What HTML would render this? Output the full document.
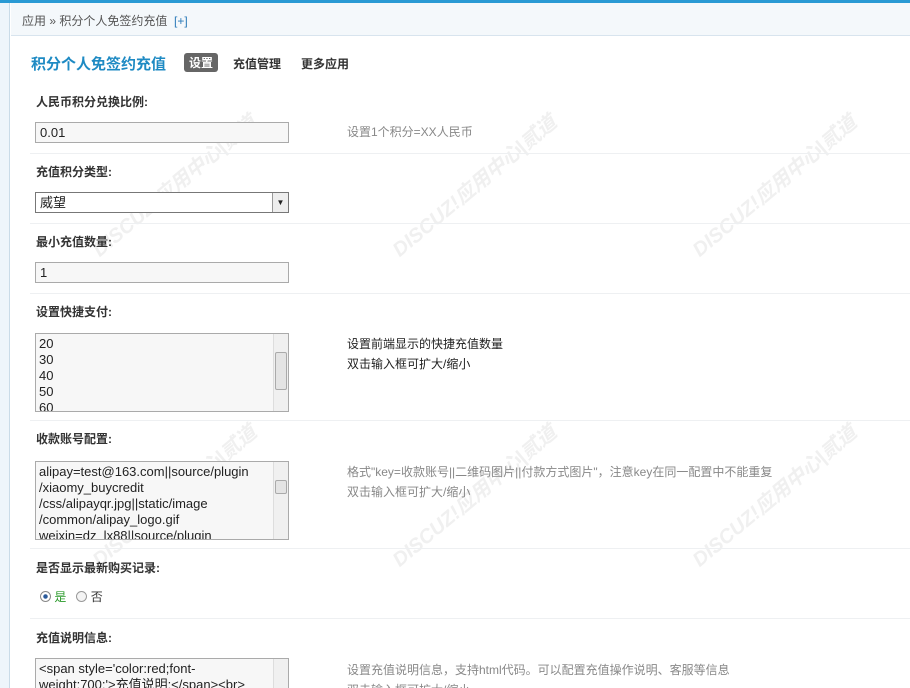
<!DOCTYPE html>
<html><head><meta charset="utf-8"><style>
*{box-sizing:border-box;margin:0;padding:0}
html,body{width:910px;height:688px;overflow:hidden}
body{background:#fff;font-family:"Liberation Sans","Noto Sans CJK SC",sans-serif;font-size:12px;color:#333;position:relative}
.top{position:absolute;left:0;top:0;width:910px;height:3px;background:#2a9ad4}
.side{position:absolute;left:0;top:3px;width:10px;height:685px;background:#eef5fb;border-right:1px solid #c9dbe8}
.crumb{position:absolute;left:11px;top:3px;right:0;height:33px;background:#f4f8fb;border-bottom:1px solid #d8e4ee;padding:9px 0 0 11px;color:#555;font-size:12px}
.crumb b{font-weight:normal;color:#2a7ab8}
.t{position:absolute;left:31px;top:53px;font-size:15px;font-weight:bold;color:#1e8ac3}
.tab{position:absolute;top:55px;font-size:12px;font-weight:bold;color:#333}
.tab.on{background:#666;color:#fff;border-radius:3px;padding:1px 5px;top:53px}
.lab{position:absolute;left:36px;font-weight:bold;font-size:12px;color:#333}
.in{position:absolute;left:35px;width:254px;border:1px solid #aaa;background:#f7f7f7;font-size:13px;padding:2px 4px;height:21px;color:#222;line-height:15px}
.ta{position:absolute;left:35px;width:254px;border:1px solid #aaa;background:#f7f7f7;font-size:13px;line-height:16px;padding:2px 3px;overflow:hidden;color:#222}
.sb{position:absolute;right:0;top:0;bottom:0;width:15px;background:#f0f0f0;border-left:1px solid #ddd}
.sb i{position:absolute;left:1px;width:12px;background:#e4e4e4;border:1px solid #aaa;border-radius:2px}
.tip{position:absolute;left:347px;color:#888;font-size:12px;line-height:20px}
.sep{position:absolute;left:30px;right:0;height:1px;background:#eef0f2}
.wm{position:absolute;color:#f0f0f0;font-size:20px;font-weight:bold;font-style:italic;transform:rotate(-40deg);white-space:nowrap}
</style></head><body>
<div class="top"></div><div class="side"></div>
<div class="crumb">应用 » 积分个人免签约充值 &nbsp;<b>[+]</b></div>
<div class="wm" style="left:370px;top:170px">DISCUZ!应用中心|贰道</div>
<div class="wm" style="left:670px;top:170px">DISCUZ!应用中心|贰道</div>
<div class="wm" style="left:70px;top:170px">DISCUZ!应用中心|贰道</div>
<div class="wm" style="left:370px;top:480px">DISCUZ!应用中心|贰道</div>
<div class="wm" style="left:670px;top:480px">DISCUZ!应用中心|贰道</div>
<div class="wm" style="left:70px;top:480px">DISCUZ!应用中心|贰道</div>
<div class="t">积分个人免签约充值</div>
<div class="tab on" style="left:184px">设置</div>
<div class="tab" style="left:233px">充值管理</div>
<div class="tab" style="left:301px">更多应用</div>

<div class="lab" style="top:93px">人民币积分兑换比例:</div>
<div class="in" style="top:122px">0.01</div>
<div class="tip" style="top:122px">设置1个积分=XX人民币</div>
<div class="sep" style="top:153px"></div>

<div class="lab" style="top:163px">充值积分类型:</div>
<div class="in" style="top:192px;background:#fff;border-color:#777">威望<span style="position:absolute;right:0;top:0;width:16px;height:19px;background:#eee;border-left:1px solid #999;font-size:8px;text-align:center;line-height:19px">▼</span></div>
<div class="sep" style="top:223px"></div>

<div class="lab" style="top:233px">最小充值数量:</div>
<div class="in" style="top:262px">1</div>
<div class="sep" style="top:293px"></div>

<div class="lab" style="top:303px">设置快捷支付:</div>
<div class="ta" style="top:333px;height:79px">20<br>30<br>40<br>50<br>60<div class="sb"><i style="top:18px;height:38px"></i></div></div>
<div class="tip" style="top:334px;color:#222">设置前端显示的快捷充值数量<br>双击输入框可扩大/缩小</div>
<div class="sep" style="top:420px"></div>

<div class="lab" style="top:430px">收款账号配置:</div>
<div class="ta" style="top:461px;height:79px">alipay=test@163.com||source/plugin<br>/xiaomy_buycredit<br>/css/alipayqr.jpg||static/image<br>/common/alipay_logo.gif<br>weixin=dz_lx88||source/plugin<div class="sb"><i style="top:18px;height:14px"></i></div></div>
<div class="tip" style="top:462px">格式"key=收款账号||二维码图片||付款方式图片"，注意key在同一配置中不能重复<br>双击输入框可扩大/缩小</div>
<div class="sep" style="top:548px"></div>

<div class="lab" style="top:559px">是否显示最新购买记录:</div>
<div style="position:absolute;left:40px;top:588px;font-size:12px"><span style="display:inline-block;width:11px;height:11px;border:1px solid #888;border-radius:50%;background:radial-gradient(#2a5a9a 30%,#fff 40%);vertical-align:-1px"></span> <span style="color:#2a9a2a">是</span> &nbsp; <span style="display:inline-block;width:11px;height:11px;border:1px solid #999;border-radius:50%;background:#f4f4f4;vertical-align:-1px"></span> 否</div>
<div class="sep" style="top:618px"></div>

<div class="lab" style="top:629px">充值说明信息:</div>
<div class="ta" style="top:658px;height:40px">&lt;span style='color:red;font-<br>weight:700;'&gt;充值说明:&lt;/span&gt;&lt;br&gt;<div class="sb"></div></div>
<div class="tip" style="top:660px">设置充值说明信息，支持html代码。可以配置充值操作说明、客服等信息<br>双击输入框可扩大/缩小</div>
</body></html>
